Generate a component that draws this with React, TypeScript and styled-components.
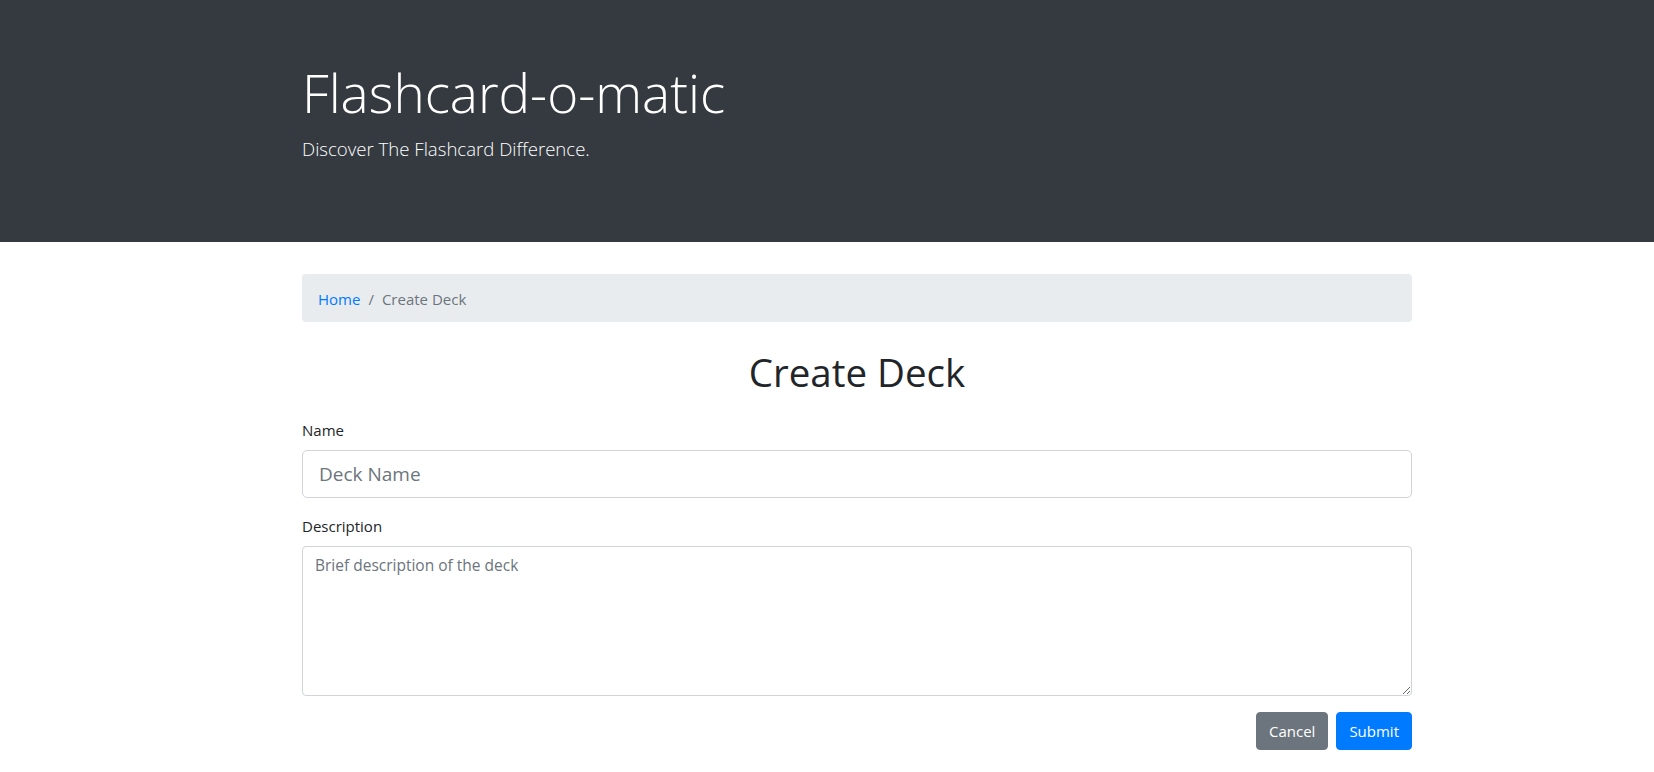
import styled, { createGlobalStyle } from "styled-components";

const GlobalStyle = createGlobalStyle`
  body {
    margin: 0;
    font-family: "Open Sans", "Noto Sans", "Liberation Sans", sans-serif;
    color: #212529;
    background: #fff;
  }
  * { box-sizing: border-box; }
`;

// 상단 어두운 헤더
const Jumbotron = styled.header`
  background-color: #343a40;
  color: #fff;
  height: 242px;
  padding-top: 61px;
`;

// 가운데 정렬이 아닌 컨테이너 (원본이 오른쪽으로 치우쳐 있음)
const Container = styled.div`
  width: 1110px;
  margin-left: 302px;
`;

const Title = styled.h1`
  margin: 0 0 10px;
  font-size: 53px;
  font-weight: 300;
  line-height: 1.2;
`;

const Lead = styled.p`
  margin: 0;
  font-size: 18.6px;
  font-weight: 300;
  line-height: 1.5;
`;

const Main = styled.main`
  padding-top: 32px;
`;

const Breadcrumb = styled.nav`
  display: flex;
  align-items: center;
  height: 48px;
  padding: 1px 16px 0;
  background-color: #e9ecef;
  border-radius: 4px;
  font-size: 15px;
  margin-bottom: 26px;
`;

const Crumb = styled.span<{ $active?: boolean }>`
  color: ${(p) => (p.$active ? "#6c757d" : "#007bff")};
`;

const Sep = styled.span`
  color: #6c757d;
  padding: 0 8px;
`;

const Heading = styled.h2`
  margin: 0 0 22px;
  text-align: center;
  font-size: 38.5px;
  font-weight: 400;
  line-height: 48px;
`;

const FormGroup = styled.div`
  margin-bottom: 16px;
`;

const Label = styled.label`
  display: block;
  font-size: 15px;
  line-height: 24px;
  margin-bottom: 8px;
`;

const Input = styled.input`
  display: block;
  width: 100%;
  height: 48px;
  padding: 8px 16px;
  font-family: inherit;
  font-size: 19px;
  color: #495057;
  border: 1px solid #ced4da;
  border-radius: 5px;
  outline: none;
  &::placeholder { color: #6c757d; }
`;

const TextArea = styled.textarea`
  display: block;
  width: 100%;
  height: 150px;
  padding: 7px 12px;
  font-family: inherit;
  font-size: 15.5px;
  line-height: 1.5;
  color: #495057;
  border: 1px solid #ced4da;
  border-radius: 4px;
  outline: none;
  &::placeholder { color: #6c757d; }
`;

const Actions = styled.div`
  display: flex;
  justify-content: flex-end;
  gap: 8px;
`;

const Button = styled.button<{ $variant: "primary" | "secondary" }>`
  height: 38px;
  padding: 0 12px;
  font-family: inherit;
  font-size: 15px;
  color: #fff;
  border: 1px solid ${(p) => (p.$variant === "primary" ? "#007bff" : "#6c757d")};
  background-color: ${(p) => (p.$variant === "primary" ? "#007bff" : "#6c757d")};
  border-radius: 4px;
  cursor: pointer;
`;

const App = () => {
  return (
    <>
      <GlobalStyle />
      <Jumbotron>
        <Container>
          <Title>Flashcard-o-matic</Title>
          <Lead>Discover The Flashcard Difference.</Lead>
        </Container>
      </Jumbotron>
      <Main>
        <Container>
          <Breadcrumb>
            <Crumb>Home</Crumb>
            <Sep>/</Sep>
            <Crumb $active>Create Deck</Crumb>
          </Breadcrumb>
          <Heading>Create Deck</Heading>
          <form onSubmit={(e) => e.preventDefault()}>
            <FormGroup>
              <Label htmlFor="name">Name</Label>
              <Input id="name" type="text" placeholder="Deck Name" />
            </FormGroup>
            <FormGroup>
              <Label htmlFor="description">Description</Label>
              <TextArea id="description" placeholder="Brief description of the deck" />
            </FormGroup>
            <Actions>
              <Button type="button" $variant="secondary">Cancel</Button>
              <Button type="submit" $variant="primary">Submit</Button>
            </Actions>
          </form>
        </Container>
      </Main>
    </>
  );
};

export default App;
